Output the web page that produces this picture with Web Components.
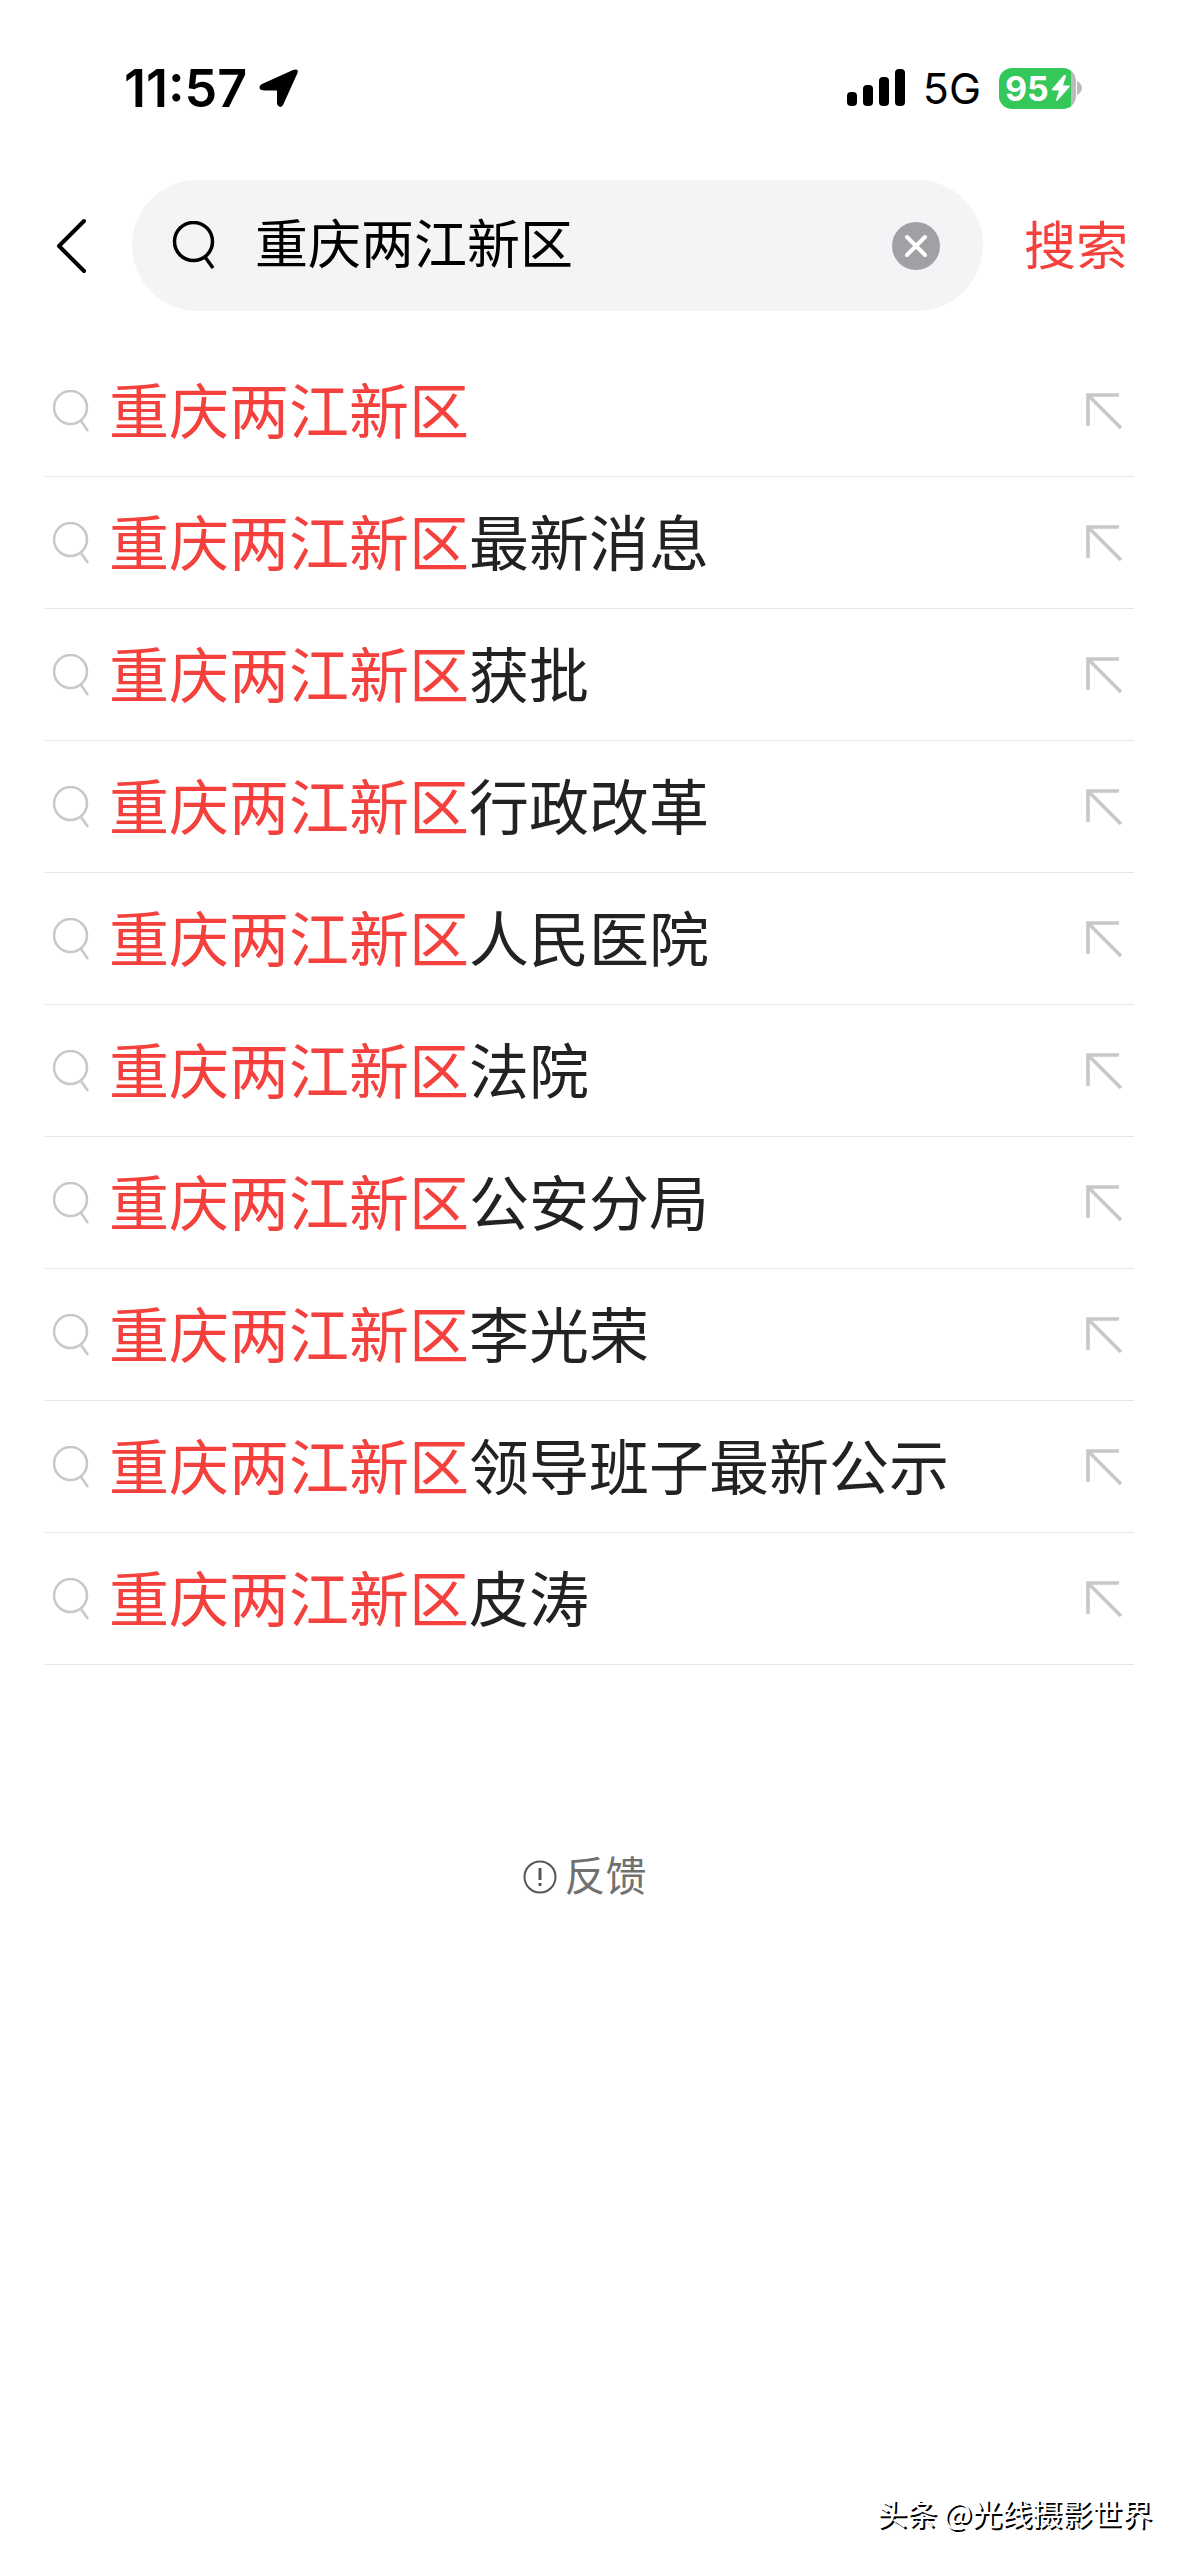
<!DOCTYPE html>
<html lang="zh-CN">
<head>
<meta charset="utf-8">
<meta name="viewport" content="width=device-width, initial-scale=1">
<title>搜索</title>
<style>
  body {
    margin: 0;
    background: #fff;
    color: #222;
    font-family: "Liberation Sans", "Noto Sans CJK SC", sans-serif;
  }
</style>
</head>
<body>
<search-page>
  <status-bar slot="top" time="11:57" network="5G" battery="95"></status-bar>
  <search-bar slot="top" value="重庆两江新区">搜索</search-bar>
  <suggest-item keyword="重庆两江新区"></suggest-item>
  <suggest-item keyword="重庆两江新区">最新消息</suggest-item>
  <suggest-item keyword="重庆两江新区">获批</suggest-item>
  <suggest-item keyword="重庆两江新区">行政改革</suggest-item>
  <suggest-item keyword="重庆两江新区">人民医院</suggest-item>
  <suggest-item keyword="重庆两江新区">法院</suggest-item>
  <suggest-item keyword="重庆两江新区">公安分局</suggest-item>
  <suggest-item keyword="重庆两江新区">李光荣</suggest-item>
  <suggest-item keyword="重庆两江新区">领导班子最新公示</suggest-item>
  <suggest-item keyword="重庆两江新区">皮涛</suggest-item>
  <feedback-link slot="after">反馈</feedback-link>
  <credit-line slot="bottom">头条 @光线摄影世界</credit-line>
</search-page>

<script>
// Attach an open shadow root and fill it with the given markup
const render = (host, html) => {
  const tmpl = document.createElement('template')
  tmpl.innerHTML = html
  host.attachShadow({ mode: 'open' }).appendChild(tmpl.content.cloneNode(true))
}


// PAGE

class SearchPage extends HTMLElement {
  constructor() {
    super()
    render(this, `
      <style>
        :host {
          display: flex;
          flex-direction: column;
          min-height: 100vh;
        }
        main {
          padding: 34px 45px 0;
        }
        footer {
          margin-top: auto;
        }
      </style>
      <header><slot name="top"></slot></header>
      <main>
        <div role="list"><slot></slot></div>
        <slot name="after"></slot>
      </main>
      <footer><slot name="bottom"></slot></footer>
    `)
  }
}
customElements.define('search-page', SearchPage)


// STATUS BAR

class StatusBar extends HTMLElement {
  constructor() {
    super()
    render(this, `
      <style>
        :host {
          display: flex;
          justify-content: space-between;
          align-items: center;
          height: 80px;
          padding: 48px 97px 0 124px;
          color: #000;
          font-family: Inter, "Liberation Sans", sans-serif;
        }
        div {
          display: flex;
          align-items: center;
        }
        svg {
          display: block;
        }
        .left {
          gap: 12px;
        }
        .right {
          gap: 18px;
        }
        .time {
          font-size: 52px;
          font-weight: 600;
        }
        .network {
          font-size: 43px;
        }
        .battery {
          gap: 1px;
        }
        .cell {
          box-sizing: border-box;
          gap: 3px;
          width: 77px;
          height: 41px;
          padding-left: 6px;
          border-radius: 13px;
          background: linear-gradient(to right, #34c759 72px, #bbb 72px);
          color: #fff;
          font-size: 34px;
          font-weight: 700;
        }
      </style>
      <div class="left">
        <span class="time"></span>
        <svg width="40" height="40" viewBox="0 0 40 40" aria-hidden="true">
          <path d="M3 16 34 2Q40 0 38.500 5L24.500 36Q23 40 20 38.500Q18 37.500 18 35V22.500H5Q0 22 .5 19Q1 17 3 16Z"/>
        </svg>
      </div>
      <div class="right">
        <svg width="58" height="38" viewBox="0 0 58 38" aria-hidden="true">
          <rect x="0" y="23" width="10" height="14" rx="4"/>
          <rect x="16" y="16" width="10" height="21" rx="4"/>
          <rect x="32" y="8" width="10" height="29" rx="4"/>
          <rect x="48" y="0" width="10" height="37" rx="4"/>
        </svg>
        <span class="network"></span>
        <div class="battery">
          <div class="cell">
            <span class="level"></span>
            <svg width="18" height="26" viewBox="0 0 18 26" aria-hidden="true">
              <path fill="#fff" d="M12 0 0 14Q0 15.500 1 15.500H7L4 25Q4 26.500 5.500 25.500L17.500 12Q18 10.500 17 10.500H11L14 1Q13.500-.8 12 0Z"/>
            </svg>
          </div>
          <svg width="5" height="14" viewBox="0 0 5 14" aria-hidden="true">
            <path fill="#bbb" d="M0 0Q5 3 5 7T0 14Z"/>
          </svg>
        </div>
      </div>
    `)
    this.shadowRoot.querySelector('.time').textContent = this.getAttribute('time')
    this.shadowRoot.querySelector('.network').textContent = this.getAttribute('network')
    this.shadowRoot.querySelector('.level').textContent = this.getAttribute('battery')
  }
}
customElements.define('status-bar', StatusBar)


// SEARCH BAR

class SearchBar extends HTMLElement {
  constructor() {
    super()
    render(this, `
      <style>
        :host {
          display: block;
          padding: 52px 51px 0;
        }
        form {
          display: flex;
          align-items: center;
          gap: 41px;
        }
        button {
          flex: none;
          padding: 0;
          border: 0;
          background: none;
          font: inherit;
          cursor: pointer;
        }
        svg {
          display: block;
          flex: none;
        }
        .field {
          display: flex;
          flex: 1;
          align-items: center;
          min-width: 0;
          height: 131px;
          box-sizing: border-box;
          padding: 0 43px 0 40px;
          border-radius: 66px;
          background: #f3f4f6;
        }
        input {
          flex: 1;
          min-width: 0;
          height: 80px;
          margin: 0 35px;
          padding: 0;
          border: 0;
          outline: 0;
          background: none;
          color: #000;
          font: inherit;
          font-size: 53px;
          line-height: 80px;
        }
        .submit {
          padding-top: 3px;
          color: #f5413d;
          font-size: 52px;
          line-height: 80px;
        }
      </style>
      <form role="search">
        <button class="back" type="button" aria-label="返回">
          <svg width="40" height="56" viewBox="0 0 40 56" fill="none" stroke="#000" stroke-width="4" stroke-linecap="round" stroke-linejoin="round">
            <path d="M33 3 8 28 33 53"/>
          </svg>
        </button>
        <div class="field">
          <svg width="48" height="50" viewBox="0 0 48 50" fill="none" stroke="#000" stroke-width="3.500">
            <circle cx="21.500" cy="20.500" r="19"/>
            <path d="M33 36 41 47"/>
          </svg>
          <input type="text" aria-label="搜索内容">
          <button class="clear" type="button" aria-label="清除">
            <svg width="48" height="48" viewBox="0 0 48 48">
              <circle cx="24" cy="24" r="24" fill="#a0a1a5"/>
              <path d="M15 15 33 33M33 15 15 33" stroke="#fff" stroke-width="4" stroke-linecap="round"/>
            </svg>
          </button>
        </div>
        <button class="submit" type="submit"><slot></slot></button>
      </form>
    `)
    this.input = this.shadowRoot.querySelector('input')
    this.input.value = this.getAttribute('value')

    this.shadowRoot.querySelector('.clear').onclick = () => {
      this.input.value = ''
      this.input.focus()
    }
    this.shadowRoot.querySelector('form').addEventListener('submit', (e) => {
      e.preventDefault()
    })
  }
}
customElements.define('search-bar', SearchBar)


// SUGGESTION ROW

class SuggestItem extends HTMLElement {
  constructor() {
    super()
    render(this, `
      <style>
        :host {
          display: flex;
          align-items: center;
          height: 131px;
          padding: 0 12px 0 8px;
          border-bottom: 1px solid #e5e5e5;
        }
        a {
          display: flex;
          flex: 1;
          align-items: center;
          gap: 20px;
          color: #222;
          font-size: 60px;
          line-height: 88px;
          text-decoration: none;
        }
        span {
          padding-top: 6px;
        }
        em {
          color: #f5413d;
          font-style: normal;
        }
        button {
          padding: 0;
          border: 0;
          background: none;
          cursor: pointer;
        }
        svg {
          display: block;
          fill: none;
          stroke: #c8c8c8;
        }
      </style>
      <a href="#">
        <svg width="36" height="42" viewBox="0 0 36 42" stroke-width="2.600" aria-hidden="true">
          <circle cx="17.500" cy="17.500" r="16.500"/>
          <path d="M28 31 35 41"/>
        </svg>
        <span><em></em><slot></slot></span>
      </a>
      <button type="button" aria-label="填入">
        <svg width="36" height="36" viewBox="0 0 36 36" stroke-width="3.600">
          <path d="M33 2H2V33M2 2 35 35"/>
        </svg>
      </button>
    `)
    this.setAttribute('role', 'listitem')
    this.shadowRoot.querySelector('em').textContent = this.getAttribute('keyword')

    // Copy the suggestion into the search box
    this.shadowRoot.querySelector('button').onclick = () => {
      const bar = document.querySelector('search-bar')
      bar.input.value = this.getAttribute('keyword') + this.textContent
    }
  }
}
customElements.define('suggest-item', SuggestItem)


// FEEDBACK

class FeedbackLink extends HTMLElement {
  constructor() {
    super()
    render(this, `
      <style>
        :host {
          display: flex;
          justify-content: center;
          padding: 182px 10px 0 0;
        }
        a {
          display: flex;
          align-items: center;
          gap: 8px;
          color: #707070;
          font-size: 41px;
          line-height: 60px;
          text-decoration: none;
        }
      </style>
      <a href="#">
        <svg width="34" height="34" viewBox="0 0 34 34" fill="none" stroke="#555" stroke-width="2" aria-hidden="true">
          <circle cx="17" cy="17" r="15.500"/>
          <path d="M17 8V20M17 23V26" stroke-width="3"/>
        </svg>
        <slot></slot>
      </a>
    `)
  }
}
customElements.define('feedback-link', FeedbackLink)


// CREDIT

class CreditLine extends HTMLElement {
  constructor() {
    super()
    render(this, `
      <style>
        :host {
          display: block;
          padding: 0 27px 22px;
          color: #fff;
          font-family: "Noto Sans CJK SC", sans-serif;
          font-size: 30px;
          line-height: 44px;
          text-align: right;
          text-shadow: 2px 2px 0 #000;
        }
      </style>
      <slot></slot>
    `)
  }
}
customElements.define('credit-line', CreditLine)
</script>
</body>
</html>
